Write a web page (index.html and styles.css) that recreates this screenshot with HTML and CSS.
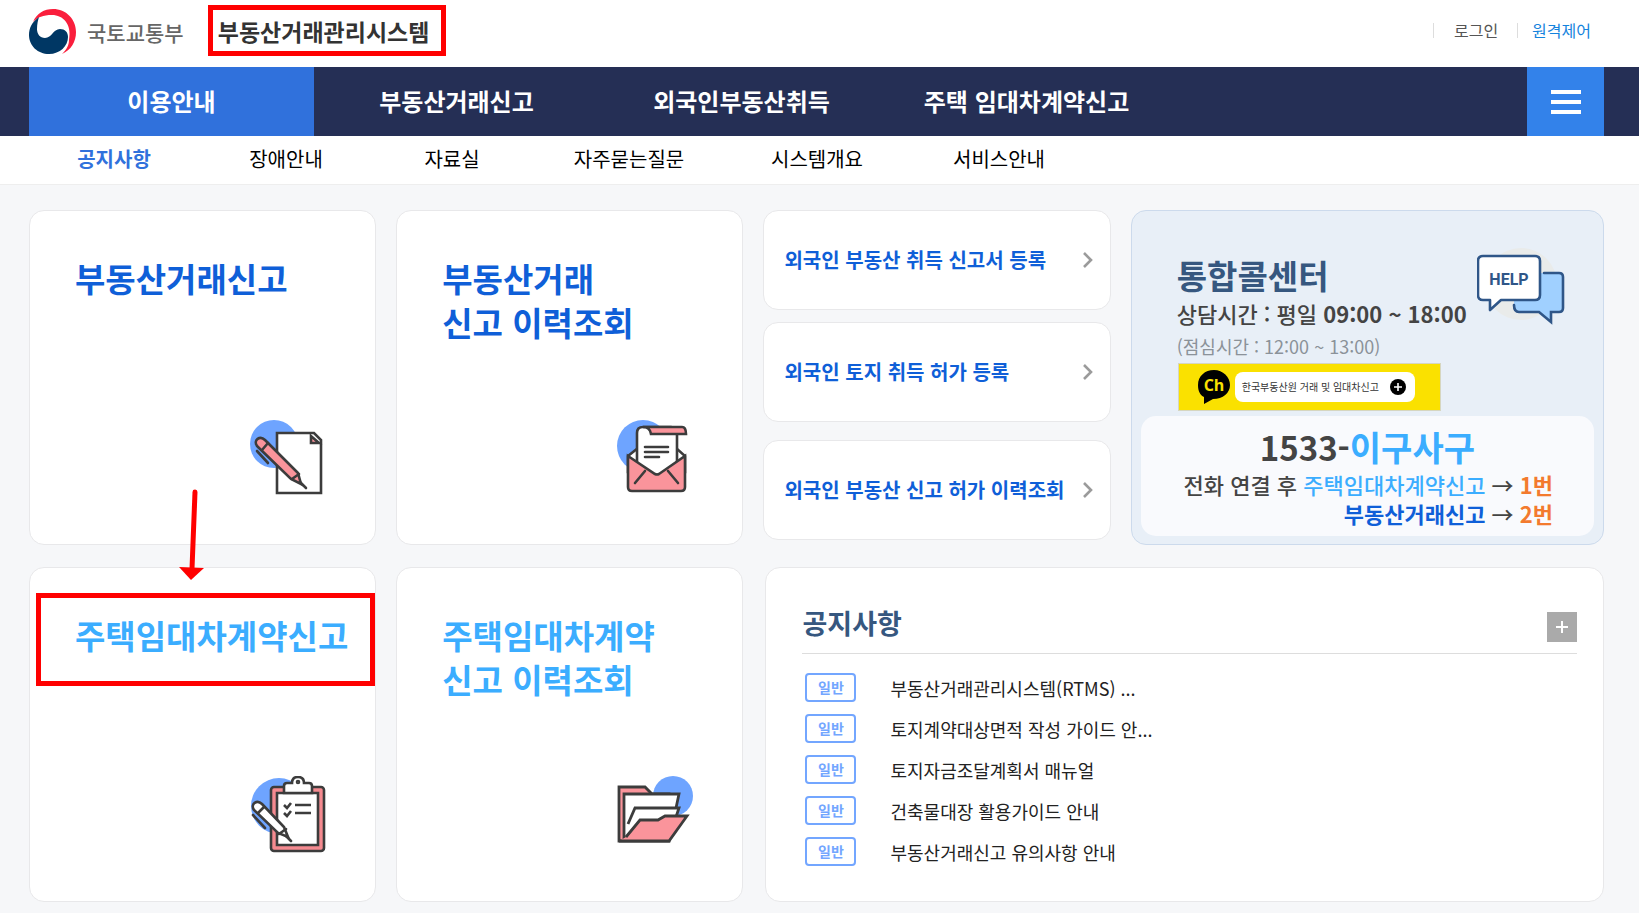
FILE: index.html
```html
<!DOCTYPE html>
<html lang="ko">
<head>
<meta charset="utf-8">
<title>부동산거래관리시스템</title>
<link rel="stylesheet" href="styles.css">
</head>
<body>
<header class="top wrap">
  <a class="ministry" href="#">
    <svg width="48" height="46" viewBox="0 0 48 46" aria-hidden="true">
      <path d="M4 13C8 4 15 0 24 0c13 0 23 10 23 23 0 10-5 18-14 22 5-5 7-9 7-14C43 15 34 6 23 6 14 6 9 8 4 13z" fill="#fa1e3c"/>
      <path d="M10 8C3 13 0 19 0 26c0 11 9 19 20 19s19-8 19-17c0-5-3-8-8-8-7 0-8 9-15 9-5 0-8-4-8-9 0-5 1-9 2-12z" fill="#003764"/>
    </svg>
    <span class="ministry-name">국토교통부</span>
  </a>
  <h1 class="system-name">부동산거래관리시스템</h1>
  <div class="user-links">
    <a class="user-link" href="#">로그인</a>
    <a class="user-link user-link-remote" href="#">원격제어</a>
  </div>
</header>

<nav class="main-nav">
  <div class="wrap main-nav-row">
    <a class="main-link main-link-on" href="#">이용안내</a>
    <a class="main-link" href="#">부동산거래신고</a>
    <a class="main-link" href="#">외국인부동산취득</a>
    <a class="main-link" href="#">주택 임대차계약신고</a>
    <button class="menu-button" type="button" aria-label="전체메뉴">
      <span class="menu-bar"></span><span class="menu-bar"></span><span class="menu-bar"></span>
    </button>
  </div>
</nav>
<nav class="sub-nav">
  <div class="wrap sub-nav-row">
    <a class="sub-link sub-link-on" href="#">공지사항</a>
    <a class="sub-link" href="#">장애안내</a>
    <a class="sub-link" href="#">자료실</a>
    <a class="sub-link" href="#">자주묻는질문</a>
    <a class="sub-link" href="#">시스템개요</a>
    <a class="sub-link" href="#">서비스안내</a>
  </div>
</nav>

<main class="wrap board">
  <a class="card tile" href="#">
    <span class="tile-title">부동산거래신고</span>
    <svg class="tile-icon" width="76" height="78" viewBox="0 0 76 78" fill="none" stroke="#3c3c3c" stroke-width="2.6" aria-hidden="true">
      <circle cx="24" cy="25" r="24" fill="#6ea4ff" stroke="none"/>
      <path d="M27 14H64L71 21V74H27z" fill="#fff"/>
      <path d="M61 17V24H69z" fill="#fa949b"/>
      <path d="M7 27C3 21 10 16 15 21L48 54 51 65 41 60 8 28z" fill="#fa949b"/>
      <path d="M12 31 18 24M49 55 42 60M50 63 56 69M7 32 18 44" stroke-linecap="round"/>
    </svg>
  </a>
  <a class="card tile" href="#">
    <span class="tile-title">부동산거래<br>신고 이력조회</span>
    <svg class="tile-icon" width="76" height="78" viewBox="0 0 76 78" fill="none" stroke="#3c3c3c" stroke-width="2.6" aria-hidden="true">
      <circle cx="26" cy="27" r="26" fill="#6ea4ff" stroke="none"/>
      <path d="M11 37 21 29H59L68 37V53H11z" fill="#fff"/>
      <path d="M20 56V14q0-6 6-6h28q6 0 6 8v40z" fill="#fff"/>
      <path d="M26 8H65q4 0 4 7H34q-1-7-8-7z" fill="#fa949b"/>
      <path d="M11 37 38 55q2 1 4 0L68 37V68q0 4-4 4H15q-4 0-4-4z" fill="#fa949b"/>
      <path d="M28 52 18 64M51 52 61 64M28 28H51M28 33H51M28 38H42" stroke-linecap="round"/>
    </svg>
  </a>
  <div class="foreign">
    <a class="card foreign-link" href="#">외국인 부동산 취득 신고서 등록
      <svg width="12" height="18" viewBox="0 0 12 18" aria-hidden="true"><path d="M2 2 9 9 2 16" fill="none" stroke="#9b9b9b" stroke-width="2.6"/></svg></a>
    <a class="card foreign-link" href="#">외국인 토지 취득 허가 등록
      <svg width="12" height="18" viewBox="0 0 12 18" aria-hidden="true"><path d="M2 2 9 9 2 16" fill="none" stroke="#9b9b9b" stroke-width="2.6"/></svg></a>
    <a class="card foreign-link foreign-history" href="#">외국인 부동산 신고 허가 이력조회
      <svg width="12" height="18" viewBox="0 0 12 18" aria-hidden="true"><path d="M2 2 9 9 2 16" fill="none" stroke="#9b9b9b" stroke-width="2.6"/></svg></a>
  </div>
  <section class="card call">
    <div class="call-head">
      <h2 class="call-title">통합콜센터</h2>
      <p class="call-hours">상담시간 : 평일 <b>09:00 ~ 18:00</b></p>
      <p class="call-lunch">(점심시간 : 12:00 ~ 13:00)</p>
      <svg class="help" width="88" height="78" viewBox="0 0 88 78" aria-hidden="true">
        <circle cx="44" cy="37" r="36" fill="#e9ebea"/>
        <path d="M37 58V50H62V26H82q4 0 4 4V61q0 4-4 4H74V75L62 65H42q-5 0-5-7z" fill="#a0d0ff"/>
        <path d="M67 26H82q4 0 4 4V61q0 4-4 4H74V75L62 65H42q-5 0-5-7" fill="none" stroke="#2f5688" stroke-width="2.6" stroke-linecap="round"/>
        <path d="M6 9H58q5 0 5 5V48q0 5-5 5H24L13 63V53H6q-5 0-5-5V14q0-5 5-5z" fill="#fff" stroke="#2f5688" stroke-width="2.6" stroke-linejoin="round"/>
        <text class="help-text" x="32" y="38" text-anchor="middle">HELP</text>
      </svg>
    </div>
    <a class="kakao" href="#">
      <svg width="34" height="36" viewBox="0 0 34 36" aria-hidden="true">
        <path d="M17 1C8 1 1 7 1 16c0 6 2 10 6 12V35l9-5c10 0 17-6 17-14S26 1 17 1z" fill="#000"/>
        <text class="kakao-ch" x="17" y="22" text-anchor="middle">Ch</text>
      </svg>
      <span class="kakao-pill">한국부동산원 거래 및 임대차신고
        <svg width="16" height="16" viewBox="0 0 16 16" aria-hidden="true"><circle cx="8" cy="8" r="8"/><path d="M8 4V12M4 8H12" stroke="#fff" stroke-width="1.6"/></svg>
      </span>
    </a>
    <div class="phone">
      <p class="phone-number">1533-<span class="sky phone-word">이구사구</span></p>
      <p class="phone-line">전화 연결 후 <span class="sky">주택임대차계약신고</span> → <span class="orange">1번</span></p>
      <p class="phone-line"><span class="blue">부동산거래신고</span> → <span class="orange">2번</span></p>
    </div>
  </section>

  <a class="card tile tile-sky" href="#">
    <span class="tile-title">주택임대차계약신고</span>
    <svg class="tile-icon" width="76" height="78" viewBox="0 0 76 78" fill="none" stroke="#3c3c3c" stroke-width="2.6" aria-hidden="true">
      <circle cx="29" cy="30" r="28" fill="#6ea4ff" stroke="none"/>
      <rect x="21" y="11" width="53" height="64" rx="3" fill="#f58a90"/>
      <path d="M27 17H68V69H27z" fill="#fff"/>
      <path d="M34 17V10q0-3 3-3h5q0-6 6-6t6 6h5q3 0 3 3v7z" fill="#fff"/>
      <circle cx="48" cy="6" r="1"/>
      <path d="M34 29 37 32 41 27M34 37 37 40 41 35M45 29H61M45 37H61"/>
      <path d="M4 34C0 28 7 23 12 28L34 51 38 61 28 57z" fill="#fff"/>
      <path d="M8 37 14 31M36 53 29 58M36 60 41 65M3 39 15 52" stroke-linecap="round"/>
    </svg>
  </a>
  <a class="card tile tile-sky" href="#">
    <span class="tile-title">주택임대차계약<br>신고 이력조회</span>
    <svg class="tile-icon" width="76" height="78" viewBox="0 0 76 78" fill="none" stroke="#3c3c3c" stroke-width="2.8" aria-hidden="true">
      <circle cx="56" cy="20" r="20" fill="#6ea4ff" stroke="none"/>
      <path d="M2 11H28L35 18H52V65H2z" fill="#fa949b"/>
      <path d="M7 18H62L56 46 20 58 9 62H7z" fill="#fff"/>
      <path d="M11 48 18 32H62L58 44" fill="#fff"/>
      <path d="M9 61 23 44H41L48 40H70L52 65H2" fill="#fa949b"/>
    </svg>
  </a>
  <section class="card notice">
    <div class="notice-head">
      <h2 class="notice-title">공지사항</h2>
      <button class="more" type="button" aria-label="공지사항 더보기"><svg width="14" height="14" viewBox="0 0 14 14" aria-hidden="true"><path d="M7 1V13M1 7H13" stroke="#fff" stroke-width="2"/></svg></button>
    </div>
    <ul class="notice-list">
      <li class="notice-item"><span class="tag">일반</span><a class="notice-link" href="#">부동산거래관리시스템(RTMS) ...</a></li>
      <li class="notice-item"><span class="tag">일반</span><a class="notice-link" href="#">토지계약대상면적 작성 가이드 안...</a></li>
      <li class="notice-item"><span class="tag">일반</span><a class="notice-link" href="#">토지자금조달계획서 매뉴얼</a></li>
      <li class="notice-item"><span class="tag">일반</span><a class="notice-link" href="#">건축물대장 활용가이드 안내</a></li>
      <li class="notice-item"><span class="tag">일반</span><a class="notice-link" href="#">부동산거래신고 유의사항 안내</a></li>
    </ul>
  </section>

  <div class="mark-card"></div>
  <svg class="mark-arrow" width="26" height="92" viewBox="0 0 26 92" aria-hidden="true"><path d="M16 3 13 80" stroke="#f00" stroke-width="5" stroke-linecap="round"/><path d="M0 78 25 79 12 91z" fill="#f00"/></svg>
</main>
</body>
</html>
```

FILE: styles.css
```css
* { box-sizing: border-box; }
body {
  margin: 0;
  background: #f6f7f9;
  color: #000;
  font-family: "Noto Sans CJK KR", "Noto Sans", sans-serif;
  line-height: 1;
}
a { color: inherit; text-decoration: none; }
h1, h2, p, ul { margin: 0; padding: 0; }
button { border: 0; padding: 0; cursor: pointer; }
svg { display: block; flex: none; }
.wrap { padding-left: 29px; padding-right: 35px; }

.top { display: flex; align-items: flex-start; height: 67px; background: #fff; }
.ministry { display: flex; align-items: center; gap: 10px; padding-top: 9px; color: #666; }
.ministry-name { font-size: 21px; font-weight: 500; }
.system-name {
  margin: 5px 0 0 24px;
  padding-right: 6px;
  width: 238px;
  height: 51px;
  border: 5px solid #f00;
  color: #333;
  font-size: 23px;
  font-weight: 700;
  line-height: 42px;
  text-align: center;
  white-space: nowrap;
}
.user-links { display: flex; margin-left: auto; padding: 23px 13px 0 0; }
.user-link { border-left: 1px solid #ddd; padding-left: 20px; margin-right: 19px; color: #555; font-size: 16px; line-height: 15px; }
.user-link-remote { padding-left: 14px; margin-right: 0; color: #1583dd; }

.main-nav { background: #252f55; }
.main-nav-row { display: flex; height: 69px; }
.main-link { width: 285px; color: #fff; font-size: 24px; font-weight: 700; line-height: 68px; text-align: center; }
.main-link-on { background: #3071dc; }
.menu-button { display: flex; flex-direction: column; justify-content: center; align-items: center; gap: 6px; width: 77px; margin-left: auto; background: #3382ea; }
.menu-bar { width: 30px; height: 4px; background: #fff; }

.sub-nav { background: #fff; border-bottom: 1px solid #eee; }
.sub-nav-row { display: grid; grid-template-columns: 170px 174px 158px 196px 180px 184px; height: 48px; font-size: 20px; line-height: 46px; text-align: center; }
.sub-link-on { color: #3071dc; font-weight: 700; }

.board {
  position: relative;
  display: grid;
  grid-template-columns: minmax(0, 347fr) minmax(0, 347fr) minmax(0, 347fr) minmax(0, 473fr);
  grid-auto-rows: 335px;
  gap: 22px 20px;
  padding-top: 25px;
  padding-bottom: 11px;
}
.card { border: 1px solid #e8e8ea; border-radius: 15px; background: #fff; }
.tile { display: flex; flex-direction: column; justify-content: space-between; padding: 45px 49px 47px 45px; color: #0f5fd8; }
.tile-sky { color: #3badff; }
.tile-title { font-size: 33px; font-weight: 700; line-height: 44px; white-space: nowrap; }
.tile-icon { align-self: flex-end; }
.foreign { display: flex; flex-direction: column; gap: 12px; }
.foreign-link { display: flex; align-items: center; justify-content: space-between; height: 100px; padding: 0 16px 0 20px; color: #0f5fd8; font-size: 20px; font-weight: 700; white-space: nowrap; }
.foreign-history { margin-top: 6px; }

.call { display: flex; flex-direction: column; padding: 42px 9px 8px; background: #e8eff7; border-color: #ccdaec; }
.call-head { position: relative; padding-left: 36px; }
.call-title { color: #36577f; font-size: 33px; font-weight: 700; line-height: 44px; }
.call-hours { color: #444; font-size: 22px; font-weight: 500; line-height: 33px; }
.call-lunch { color: #8b9299; font-size: 18px; line-height: 33px; }
.help { position: absolute; top: -6px; right: 29px; }
.help-text { fill: #2f5688; font: 700 16px Roboto, sans-serif; }
.kakao { display: flex; align-items: center; gap: 4px; width: 263px; height: 48px; margin-left: 37px; padding-left: 18px; border: 1px solid #d6d6c0; background: #fae100; }
.kakao-ch { fill: #fae100; font: 700 16px "Open Sans", sans-serif; }
.kakao-pill { display: flex; align-items: center; justify-content: space-between; width: 180px; height: 30px; padding: 0 9px 0 7px; border-radius: 8px; background: #fff; color: #333; font-size: 10px; white-space: nowrap; }
.phone { flex: 1; margin-top: 5px; padding: 8px 41px 0; border-radius: 15px; background: #f9fafd; color: #444; text-align: right; white-space: nowrap; }
.phone-number { font-size: 33px; font-weight: 700; line-height: 46px; text-align: center; }
.phone-word { font-size: 34px; }
.phone-line { font-size: 22px; font-weight: 500; line-height: 29px; }
.sky { color: #3badff; }
.blue { color: #0f5fd8; }
.orange { color: #f37a2e; }
.blue, .orange { font-weight: 700; }

.notice { grid-column: 3 / 5; margin-left: 2px; padding: 32px 26px 0 36px; }
.notice-head { display: flex; align-items: center; justify-content: space-between; height: 54px; border-bottom: 1px solid #ddd; }
.notice-title { padding-bottom: 8px; color: #36577f; font-size: 27px; font-weight: 700; }
.more { display: flex; align-items: center; justify-content: center; width: 30px; height: 30px; background: #aaa; }
.notice-list { list-style: none; padding: 13px 3px; }
.notice-item { display: flex; align-items: center; gap: 34px; height: 41px; }
.tag { width: 51px; height: 29px; border: 2px solid #73a6ff; border-radius: 4px; color: #73a6ff; font-size: 14px; font-weight: 700; line-height: 24px; text-align: center; }
.notice-link { color: #222; font-size: 18px; }

.mark-card { position: absolute; left: 36px; top: 408px; width: 339px; height: 93px; border: 5px solid #f00; }
.mark-arrow { position: absolute; left: 179px; top: 304px; }
```
